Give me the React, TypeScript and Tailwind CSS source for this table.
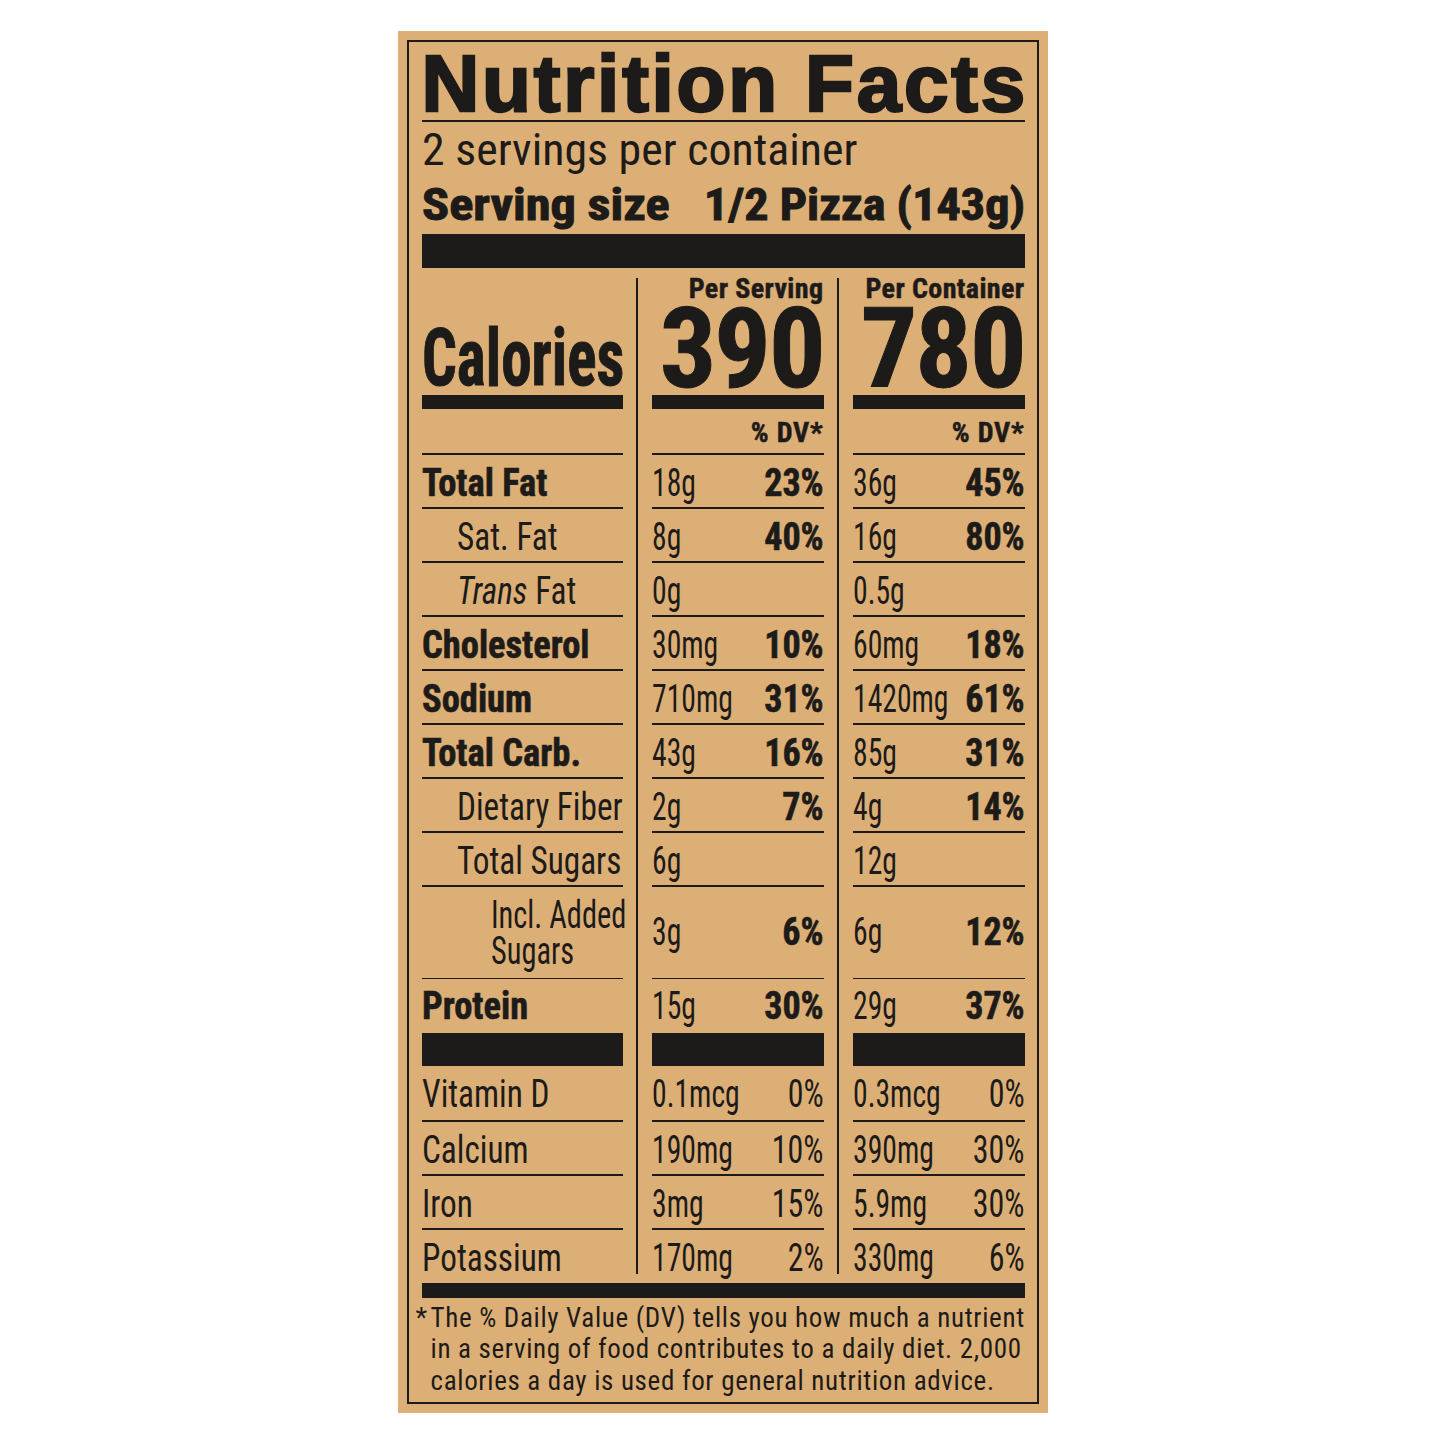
import React from "react";

const RC = { fontFamily: '"Roboto Condensed", "Liberation Sans Narrow", sans-serif' };
const DARK = "bg-[#1d1b19]";

type Row = {
  label: React.ReactNode;
  bold?: boolean;
  indent?: number;
  s: [string, string];
  c: [string, string];
  dvBold?: boolean;
};

const rows: Row[] = [
  { label: "Total Fat", bold: true, s: ["18g", "23%"], c: ["36g", "45%"], dvBold: true },
  { label: "Sat. Fat", indent: 35, s: ["8g", "40%"], c: ["16g", "80%"], dvBold: true },
  {
    label: (
      <>
        <span className="italic">Trans</span> Fat
      </>
    ),
    indent: 35,
    s: ["0g", ""],
    c: ["0.5g", ""],
  },
  { label: "Cholesterol", bold: true, s: ["30mg", "10%"], c: ["60mg", "18%"], dvBold: true },
  { label: "Sodium", bold: true, s: ["710mg", "31%"], c: ["1420mg", "61%"], dvBold: true },
  { label: "Total Carb.", bold: true, s: ["43g", "16%"], c: ["85g", "31%"], dvBold: true },
  { label: "Dietary Fiber", indent: 35, s: ["2g", "7%"], c: ["4g", "14%"], dvBold: true },
  { label: "Total Sugars", indent: 35, s: ["6g", ""], c: ["12g", ""] },
];

const vits: { label: string; s: [string, string]; c: [string, string]; h: number; rule: boolean }[] = [
  { label: "Vitamin D", s: ["0.1mcg", "0%"], c: ["0.3mcg", "0%"], h: 54, rule: true },
  { label: "Calcium", s: ["190mg", "10%"], c: ["390mg", "30%"], h: 52.5, rule: true },
  { label: "Iron", s: ["3mg", "15%"], c: ["5.9mg", "30%"], h: 52.5, rule: true },
  { label: "Potassium", s: ["170mg", "2%"], c: ["330mg", "6%"], h: 44, rule: false },
];

function Rule() {
  return <div className={`h-[1.5px] ${DARK}`} />;
}

function VLine() {
  return <div className={`mt-[10px] w-[1.5px] self-stretch ${DARK}`} />;
}

function Val({ children }: { children: React.ReactNode }) {
  return (
    <div className="w-0 flex-none whitespace-nowrap">
      <span className="inline-block origin-left scale-x-[0.78] font-normal">{children}</span>
    </div>
  );
}

function Dv({ children, bold }: { children: React.ReactNode; bold?: boolean }) {
  return bold ? (
    <span className="ml-auto inline-block origin-right scale-x-[0.95] whitespace-nowrap font-bold [-webkit-text-stroke:0.6px_#1d1b19]">
      {children}
    </span>
  ) : (
    <span className="ml-auto inline-block origin-right scale-x-[0.84] whitespace-nowrap font-normal">{children}</span>
  );
}

function LabelText({ children, bold, scale }: { children: React.ReactNode; bold?: boolean; scale?: string }) {
  return bold ? (
    <span className="inline-block origin-left scale-x-[0.96] whitespace-nowrap font-bold [-webkit-text-stroke:0.6px_#1d1b19]">
      {children}
    </span>
  ) : (
    <span
      className={`inline-block origin-left whitespace-nowrap font-normal ${scale === "tight" ? "scale-x-[0.8]" : "scale-x-[0.875]"}`}
    >
      {children}
    </span>
  );
}

function LeftColumn() {
  return (
    <div className="flex w-[201px] shrink-0 flex-col">
      <div className="h-[127px] pt-[49.5px]">
        <div className="w-0 text-[80px] leading-[80px]">
          <span className="inline-block origin-left scale-x-[0.765] whitespace-nowrap font-bold [-webkit-text-stroke:1px_#1d1b19]">
            Calories
          </span>
        </div>
      </div>
      <div className={`h-[14px] ${DARK}`} />
      <div className="h-[44px]" />
      <Rule />
      {rows.map((r, i) => (
        <div key={i}>
          <div className="h-[52.5px] pt-[9px] text-[38px] leading-[38px]" style={{ paddingLeft: r.indent ?? 0 }}>
            <LabelText bold={r.bold}>{r.label}</LabelText>
          </div>
          <Rule />
        </div>
      ))}
      <div className="h-[91px] pl-[69px] pt-[10.5px] text-[38px] leading-[36px]">
        <div className="w-0">
          <LabelText scale="tight">Incl. Added</LabelText>
        </div>
        <div className="w-0">
          <LabelText scale="tight">Sugars</LabelText>
        </div>
      </div>
      <Rule />
      <div className="h-[54px] pt-[8px] text-[38px] leading-[38px]">
        <LabelText bold>Protein</LabelText>
      </div>
      <div className={`h-[33px] ${DARK}`} />
      {vits.map((v, i) => (
        <div key={i}>
          <div className="pt-[9px] text-[38px] leading-[38px]" style={{ height: v.h }}>
            <LabelText>{v.label}</LabelText>
          </div>
          {v.rule && <Rule />}
        </div>
      ))}
    </div>
  );
}

function DataColumn({ which }: { which: "s" | "c" }) {
  const head = which === "s" ? "Per Serving" : "Per Container";
  const cal = which === "s" ? "390" : "780";
  const added = which === "s" ? ["3g", "6%"] : ["6g", "12%"];
  const prot = which === "s" ? ["15g", "30%"] : ["29g", "37%"];
  return (
    <div className="flex w-[172px] shrink-0 flex-col">
      <div className="flex h-[127px] flex-col items-end pt-[6.5px]">
        <div className="whitespace-nowrap text-[28px] font-bold leading-[28px] tracking-[0.4px] [-webkit-text-stroke:0.5px_#1d1b19]">
          {head}
        </div>
        <div className="mt-[6px] whitespace-nowrap text-[112px] font-bold leading-[80px] tracking-[-2px] [-webkit-text-stroke:1px_#1d1b19]">
          {cal}
        </div>
      </div>
      <div className={`h-[14px] ${DARK}`} />
      <div className="h-[44px] pt-[9.5px] text-right text-[28px] font-bold leading-[28px] tracking-[0.8px] [-webkit-text-stroke:0.5px_#1d1b19]">
        % DV*
      </div>
      <Rule />
      {rows.map((r, i) => (
        <div key={i}>
          <div className="flex h-[52.5px] items-start pt-[9px] text-[38px] leading-[38px]">
            <Val>{r[which][0]}</Val>
            <Dv bold={r.dvBold}>{r[which][1]}</Dv>
          </div>
          <Rule />
        </div>
      ))}
      <div className="flex h-[91px] items-center text-[38px] leading-[38px]">
        <Val>{added[0]}</Val>
        <Dv bold>{added[1]}</Dv>
      </div>
      <Rule />
      <div className="flex h-[54px] items-start pt-[8px] text-[38px] leading-[38px]">
        <Val>{prot[0]}</Val>
        <Dv bold>{prot[1]}</Dv>
      </div>
      <div className={`h-[33px] ${DARK}`} />
      {vits.map((v, i) => (
        <div key={i}>
          <div className="flex items-start pt-[9px] text-[38px] leading-[38px]" style={{ height: v.h }}>
            <Val>{v[which][0]}</Val>
            <Dv>{v[which][1]}</Dv>
          </div>
          {v.rule && <Rule />}
        </div>
      ))}
    </div>
  );
}

export default function App() {
  return (
    <div className="min-h-[1445px] w-full bg-white pt-[31px]">
      <div className="mx-auto h-[1382px] w-[650px] bg-[#dcaf76] p-[9px] text-[#1d1b19]" style={RC}>
        <div className="flex h-full flex-col border-2 border-[#1d1b19] pl-[13px] pr-[12px]">
          <div className="h-[78px] pt-[6px]">
            <div
              className="whitespace-nowrap text-[80px] font-bold leading-[72px] tracking-[2.8px] [-webkit-text-stroke:2.5px_#1d1b19]"
              style={{ fontFamily: '"Liberation Sans", Arial, sans-serif' }}
            >
              Nutrition Facts
            </div>
          </div>
          <Rule />
          <div className="flex h-[56px] items-center text-[45px] leading-[45px]">
            <span className="inline-block origin-left scale-x-[1.02] whitespace-nowrap font-normal">
              2 servings per container
            </span>
          </div>
          <div className="flex h-[53px] items-center justify-between text-[45px] leading-[45px]">
            <span className="inline-block origin-left scale-x-[1.12] whitespace-nowrap font-bold [-webkit-text-stroke:1px_#1d1b19]">
              Serving size
            </span>
            <span className="inline-block origin-right scale-x-[1.07] whitespace-nowrap font-bold [-webkit-text-stroke:1px_#1d1b19]">
              1/2 Pizza (143g)
            </span>
          </div>
          <div className={`mt-[3.5px] h-[34px] ${DARK}`} />
          <div className="flex">
            <LeftColumn />
            <div className="w-[13.5px] shrink-0" />
            <VLine />
            <div className="w-[14px] shrink-0" />
            <DataColumn which="s" />
            <div className="w-[13.5px] shrink-0" />
            <VLine />
            <div className="w-[14px] shrink-0" />
            <DataColumn which="c" />
          </div>
          <div className={`mt-[9px] h-[15px] ${DARK}`} />
          <div className="relative pl-[9px] pt-[5px] text-[27px] font-normal leading-[31.5px] tracking-[0.68px]">
            <span className="absolute left-[-6px] top-[5px]">*</span>
            <div className="whitespace-nowrap">The % Daily Value (DV) tells you how much a nutrient</div>
            <div className="whitespace-nowrap">in a serving of food contributes to a daily diet. 2,000</div>
            <div className="whitespace-nowrap">calories a day is used for general nutrition advice.</div>
          </div>
        </div>
      </div>
    </div>
  );
}
